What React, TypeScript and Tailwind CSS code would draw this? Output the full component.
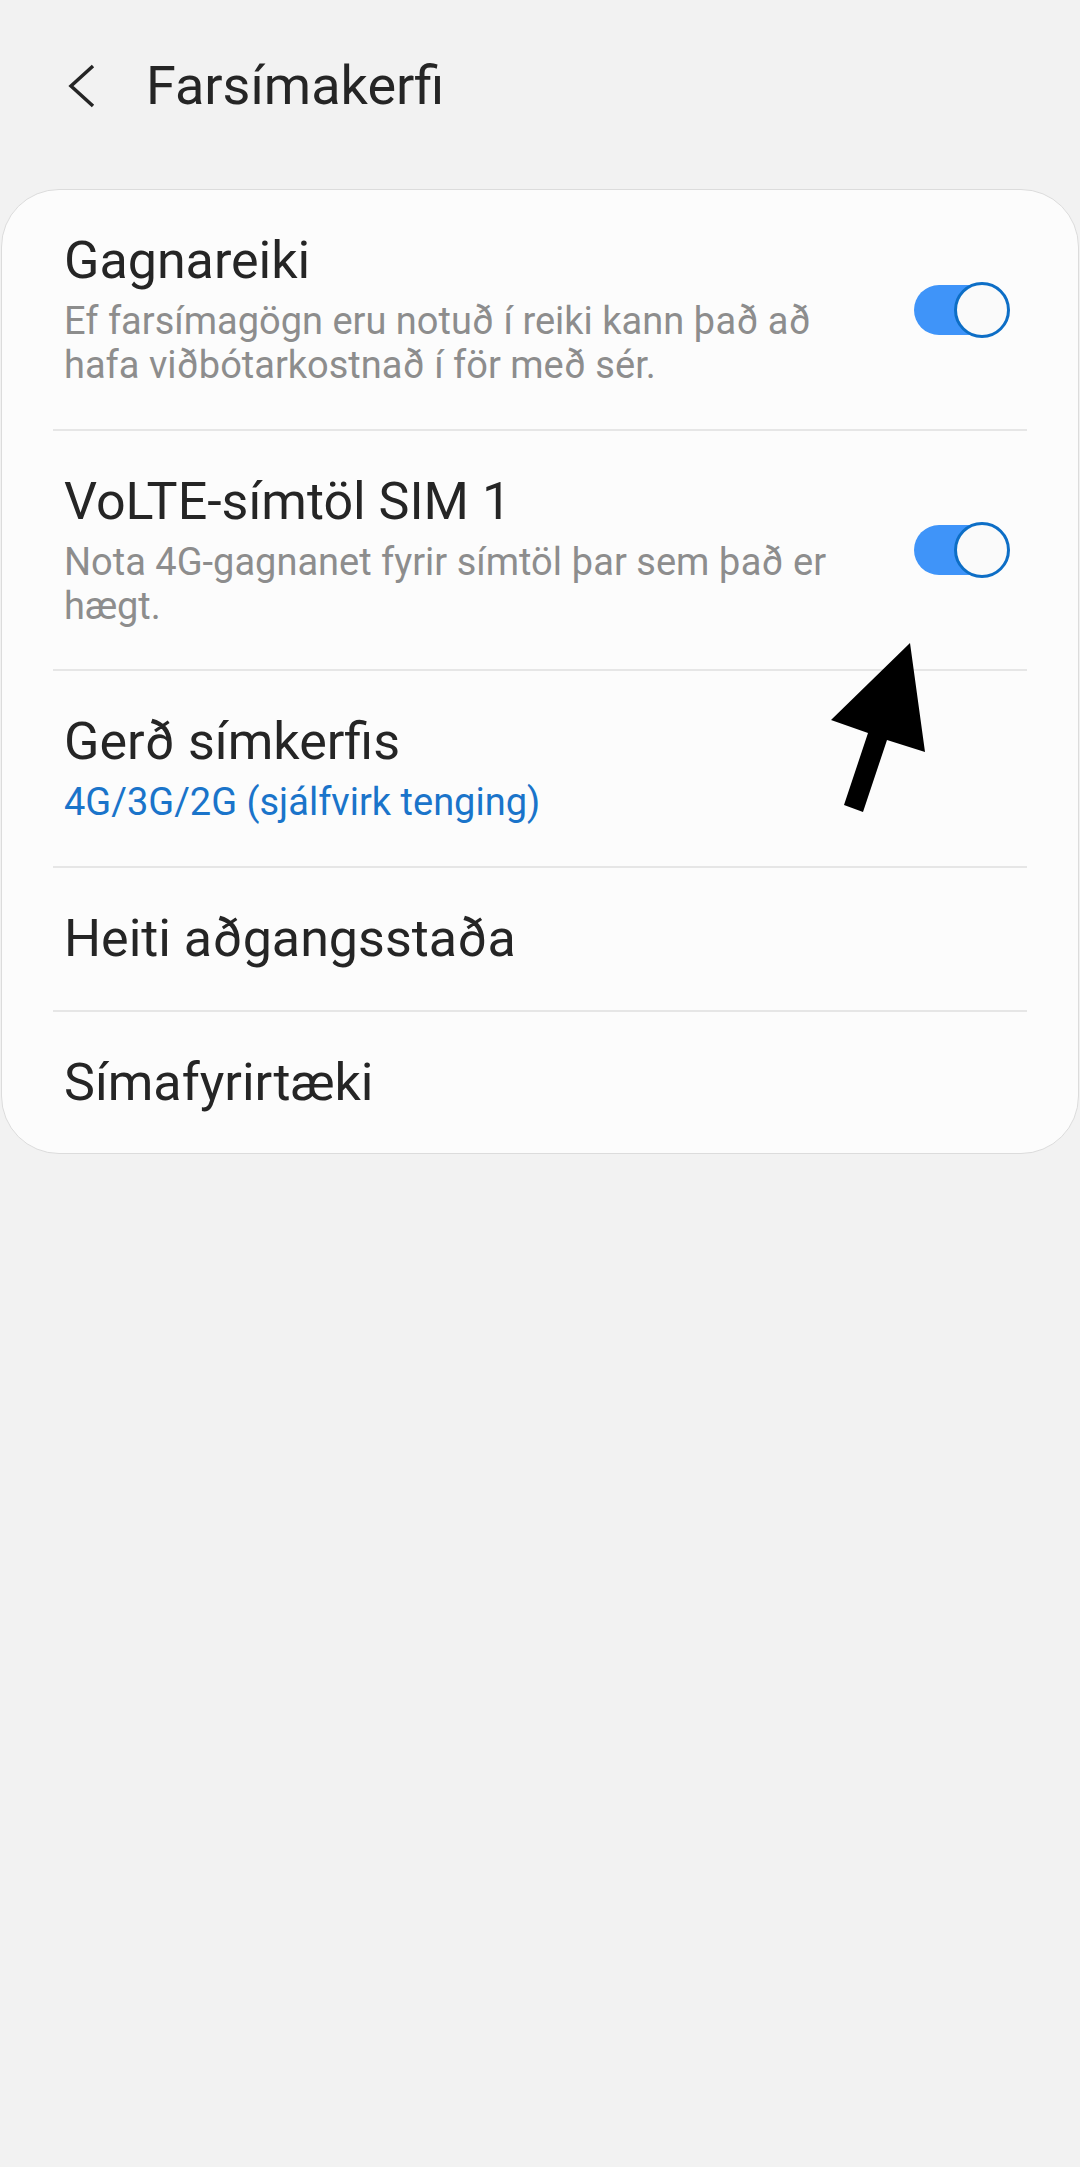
import { ReactNode } from "react";

type TRow = {
  title: string;
  subtitle?: string;
  blue?: boolean;
  toggle?: boolean;
  height: string;
};

const rows: TRow[] = [
  {
    title: "Gagnareiki",
    subtitle: "Ef farsímagögn eru notuð í reiki kann það að hafa viðbótarkostnað í för með sér.",
    toggle: true,
    height: "h-[239px]",
  },
  {
    title: "VoLTE-símtöl SIM 1",
    subtitle: "Nota 4G-gagnanet fyrir símtöl þar sem það er hægt.",
    toggle: true,
    height: "h-[238px]",
  },
  {
    title: "Gerð símkerfis",
    subtitle: "4G/3G/2G (sjálfvirk tenging)",
    blue: true,
    height: "h-[195px]",
  },
  { title: "Heiti aðgangsstaða", height: "h-[142px]" },
  { title: "Símafyrirtæki", height: "h-[141px]" },
];

function Toggle() {
  return (
    <div className="relative w-[96px] h-[56px] shrink-0">
      <div className="absolute left-0 top-[3px] w-[84px] h-[50px] rounded-full bg-[#3f94f9]" />
      <div className="absolute right-0 top-0 size-[56px] rounded-full border-[3px] border-[#0d6ec6] bg-[#fafafa]" />
    </div>
  );
}

function Divider() {
  return <div className="mx-[51px] h-[2px] bg-[#e6e6e6]" />;
}

function Row({ row }: { row: TRow }) {
  return (
    <div className={`${row.height} flex items-center justify-between pl-[62px] pr-[68px]`}>
      <div className="flex flex-col max-w-[790px]">
        <p className="text-[52px] leading-[58px] text-[#252525]">{row.title}</p>
        {row.subtitle && (
          <p
            className={
              row.blue
                ? "mt-[9px] text-[38px] leading-[44px] text-[#1a74ca]"
                : "mt-[9px] text-[38px] leading-[44px] text-[#8d8d8d]"
            }
          >
            {row.subtitle}
          </p>
        )}
      </div>
      {row.toggle && <Toggle />}
    </div>
  );
}

export default function App() {
  const items: ReactNode[] = [];
  rows.forEach((row, i) => {
    if (i > 0) items.push(<Divider key={`d${i}`} />);
    items.push(<Row key={row.title} row={row} />);
  });

  return (
    <div className="relative min-h-screen bg-[#f2f2f2] font-['Roboto','Noto_Sans',sans-serif]">
      {/* header */}
      <div className="h-[172px] flex items-center pl-[66px]">
        <svg width="32" height="44" viewBox="0 0 32 44" className="shrink-0">
          <polyline points="27,2 5,22 27,42" fill="none" stroke="#252525" strokeWidth="3.5" />
        </svg>
        <h1 className="ml-[48px] text-[54px] leading-none text-[#252525]">Farsímakerfi</h1>
      </div>

      <div className="mt-[17px] mx-px rounded-[58px] border border-[#dcdcdc] bg-[#fcfcfc] overflow-hidden">
        {items}
      </div>

      {/* arrow annotation */}
      <svg
        width="115"
        height="185"
        viewBox="0 0 115 185"
        className="absolute left-[820px] top-[635px]"
      >
        <polygon points="90,8 11,85 48,98 24,170 43,177 67,105 105,117" fill="#000" />
      </svg>
    </div>
  );
}
